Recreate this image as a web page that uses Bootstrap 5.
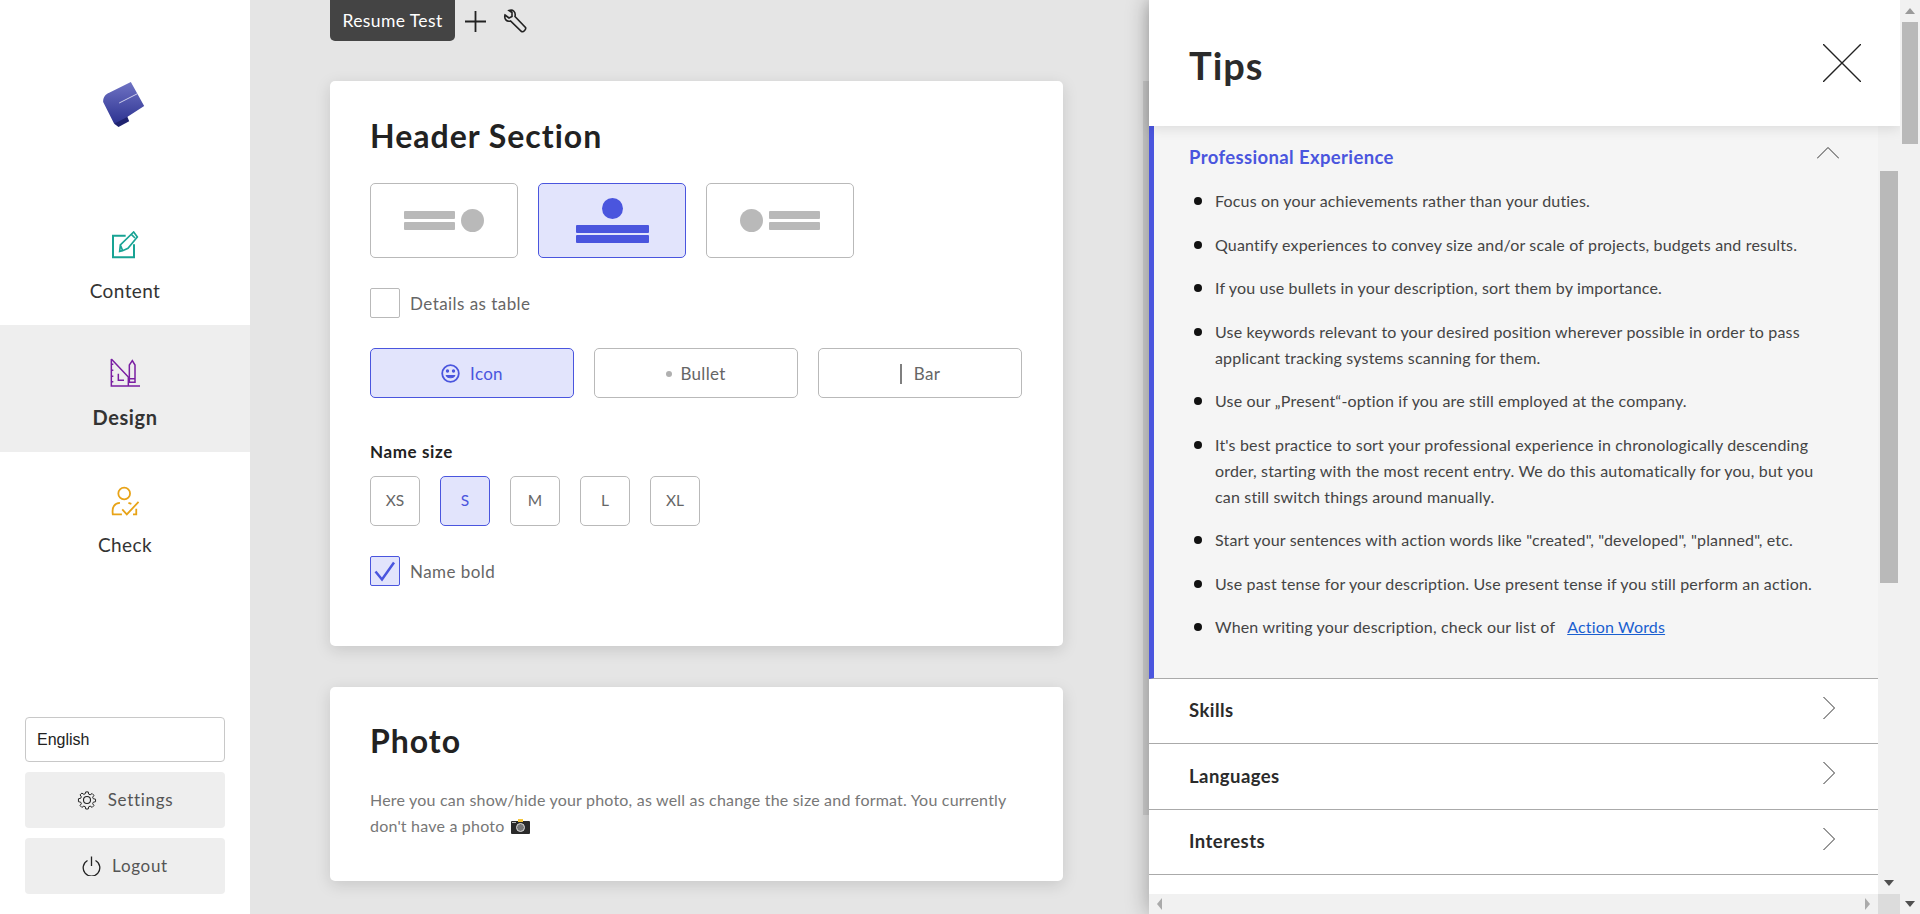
<!DOCTYPE html>
<html lang="en"><head><meta charset="utf-8"><title>Resume</title>
<link href="https://cdn.jsdelivr.net/npm/bootstrap@5.3.0/dist/css/bootstrap.min.css" rel="stylesheet">
<style>
html,body{height:914px;overflow:hidden}
body{font-family:Lato,"Noto Sans",sans-serif;color:#2b2b2b;background:#e5e5e5;font-size:16px}
.app{height:914px}
.side{width:250px;background:#fff;flex:none}
.logo-box{height:198px;padding:82px 0 0 103px}
.nav-it{height:127px;text-align:center;padding-top:33px;font-size:19px;letter-spacing:.4px;color:#333}
.nav-it svg{display:block;margin:0 auto 18px}
.nav-it.on{background:#eee;font-weight:700;font-size:20px;letter-spacing:.6px;padding-top:32px}
.nav-it.on svg{margin-bottom:14px}
.nav-it.last{padding-top:34px}
.nav-it.last svg{margin-bottom:15px}
.side-foot{padding:0 25px 20px}
.lang{height:45px;border:1px solid #c8c8c8;border-radius:4px;font:16px/43px "Liberation Sans",sans-serif;color:#222;padding-left:11px;margin-bottom:10px}
.side-btn{height:56px;background:#eee;border-radius:4px;color:#555;font-size:17px;letter-spacing:.7px;gap:11px;margin-top:10px}
.main-area{width:899px;flex:none;padding:0 0 0 80px;overflow:hidden;position:relative}
.tabbar{height:81px}
.tab-name{width:125px;height:41px;background:#444;color:#fff;border-radius:0 0 5px 5px;font-size:17.5px;letter-spacing:.4px;padding-top:1px}
.sheet{width:733px;flex:none}
.pane{background:#fff;border-radius:5px;box-shadow:0 4px 16px rgba(0,0,0,.13);padding:35px 41px 0 40px}
.pane-a{height:565px}
.pane-b{height:194px;margin-top:41px;padding-top:34px}
.pane h2{font-size:32px;letter-spacing:1px;font-weight:700;line-height:40px;margin:0;color:#222}
.preview{width:6px;height:734px;background:#d0d0d0;margin:0 0 0 80px;flex:none}
.opt{border:1px solid #b9b9b9;border-radius:5px;background:#fff;color:#666}
.opt.sel{background:#e2e4fc;border-color:#4a55de;color:#4a55de}
.lay{width:148px;height:75px;gap:6px}
.bars{gap:3px}
.bars i{display:block;height:8px;background:#b9b9b9;border-radius:1px;width:51px}
.dot{width:23px;height:23px;border-radius:50%;background:#b9b9b9}
.sel .bars{gap:2px}
.sel .bars i{background:#4a55de;width:73px}
.sel .dot{background:#4a55de;width:21px;height:21px}
.tick{width:30px;height:30px;border:1px solid #b9b9b9;border-radius:2px;background:#fff}
.tick.sel{background:#e2e4fc;border-color:#4a55de}
.tick-lab{color:#666;font-size:17px;letter-spacing:.45px;margin-left:10px;padding-top:1px}
.wide{width:204px;height:50px;font-size:17px;letter-spacing:.3px;gap:10px;padding-top:1px}
.sq{width:50px;height:50px;font-size:15.5px}
.nm-lab{font-weight:700;font-size:17px;letter-spacing:.6px;color:#222;line-height:20px;margin:44px 0 14px}
.note{font-size:16px;letter-spacing:.2px;line-height:26px;color:#777;margin:26px 0 0}
.tips{width:751px;flex:none;background:#fff;box-shadow:0 0 22px rgba(0,0,0,.32);position:relative;z-index:2}
.tips-head{height:126px;padding:0 39px 0 40px;box-shadow:0 3px 12px rgba(0,0,0,.1);position:relative;z-index:2;background:#fff}
.tips-head h1{font-size:38px;letter-spacing:1px;font-weight:700;margin:0;padding-top:6px;color:#2b2b2b}
.tips-mid{height:788px}
.tips-list{width:729px;height:768px;flex:none;overflow:hidden}
.open{height:553px;background:#f5f5f5;border-left:5px solid #4a55de;padding:0 39px 0 35px;border-bottom:1px solid #aaa}
.open-h{height:62px;color:#4a55de;font-size:18.5px;letter-spacing:.37px;font-weight:700;padding-top:18px}
.open ul{list-style:none;margin:0;padding:0 10px 0 26px;font-size:16px;letter-spacing:.17px;line-height:26px;color:#444}
.open li{margin-bottom:17.5px;position:relative}
.open li::before{content:"";position:absolute;left:-21px;top:9px;width:8px;height:8px;border-radius:50%;background:#111}
.open a{color:#1a5fd0;margin-left:8px}
.row-it{height:65.3px;padding:0 43px 0 40px;border-bottom:1px solid #aaa;font-size:18.5px;letter-spacing:.45px;font-weight:700;color:#2b2b2b;background:#fff}
.row-it svg{margin-bottom:6px}
.vbar{width:22px;flex:none;background:#f1f1f1;padding:0 2px}
.hbar{height:20px;background:#f1f1f1;padding:0 8px}
.thumb{background:#b9b9b9;height:412px;margin-top:45px}
.page-bar{width:20px;flex:none;background:#f1f1f1;padding:0 2px;position:relative;z-index:3}
.page-thumb{height:122px;background:#b9b9b9}
.ar{display:block;width:0;height:0;margin:0 auto;border-style:solid;border-color:transparent}
.ar-u{border-width:0 5px 6px;border-bottom-color:#9a9a9a}
.ar-d{border-width:6px 5px 0;border-top-color:#505050}
.ar-l{border-width:6px 5px 6px 0;border-right-color:#aaa}
.ar-r{border-width:6px 0 6px 5px;border-left-color:#aaa}
.corner{width:22px;height:20px;background:#dcdcdc;flex:none}
</style></head><body>
<div class="app d-flex">
 <aside class="side d-flex flex-column">
  <div class="logo-box">
   <svg width="42" height="45" viewBox="0 0 125 135"><defs><linearGradient id="lg" x1="0" y1="0" x2="0" y2="1"><stop offset="0" stop-color="#6f73c4"/><stop offset="1" stop-color="#2d3391"/></linearGradient></defs>
   <path d="M72 103L78 118 46 135 33 125 40 110Z" fill="#1f2370"/><path d="M83 0L123 72 72 105 33 125 0 60C-1 45 8 36 18 32Z" fill="url(#lg)"/><path d="M48 63L103 35" stroke="#e8e8f8" stroke-width="2.500"/></svg>
  </div>
  <div class="nav-it"><svg width="28" height="28" viewBox="155 62 84 84" fill="none" stroke="#18a394" stroke-width="6"><path d="M199 76H161V141H224V102"/><path d="M183 104l7 17 16-7 28-34-11-15zM216 72l11 11M190 121l-9 2 2-19" stroke-width="5"/></svg>Content</div>
  <div class="nav-it on"><svg width="31" height="31" viewBox="150 440 93 93" fill="none" stroke="#7a1fa2" stroke-width="4.500"><path d="M154 446V527H240M154 446L205 500V527M175 490V510H192M154 462h6M154 480h6M154 498h6M154 514h6"/><path d="M208 516V464L217 451 225 464V516ZM208 505H225"/></svg>Design</div>
  <div class="nav-it last"><svg width="29" height="30" viewBox="155 825 88 92" fill="none" stroke="#e8a317" stroke-width="5.500"><circle cx="195" cy="848" r="18"/><path d="M182 877C165 878 157 890 160 912H188M208 877L217 880M232 895V912H222"/><path d="M189 897L203 912 239 874"/></svg>Check</div>
  <div class="side-foot mt-auto">
   <div class="lang">English</div>
   <div class="side-btn d-flex align-items-center justify-content-center"><svg width="20" height="20" viewBox="0 0 20 20" fill="none" stroke="#222" stroke-width="1.100"><path d="M8.600 1h2.800l.5 2.500 1.600.7 2.200-1.400 2 2-1.400 2.200.7 1.600 2.500.5v2.800l-2.500.5-.7 1.600 1.400 2.200-2 2-2.200-1.400-1.600.7-.5 2.500H8.600l-.5-2.500-1.600-.7-2.200 1.400-2-2 1.400-2.200-.7-1.600-2.500-.5V8.600l2.500-.5.7-1.600-1.400-2.200 2-2 2.200 1.400 1.600-.7z" transform="translate(1 1) scale(.9)"/><circle cx="10" cy="10" r="3.500"/></svg>Settings</div>
   <div class="side-btn d-flex align-items-center justify-content-center"><svg width="19" height="20" viewBox="0 0 19 20" fill="none" stroke="#222" stroke-width="1.300"><path d="M5.500 4.500A8.300 8.300 0 1 0 13.500 4.500M9.500 0.500V10"/></svg>Logout</div>
  </div>
 </aside>
 <main class="main-area">
  <div class="tabbar d-flex align-items-start">
   <div class="tab-name d-flex align-items-center justify-content-center">Resume Test</div>
   <svg width="21" height="24" viewBox="0 0 21 24" stroke="#222" stroke-width="1.800" style="margin:9px 0 0 10px"><path d="M10.500 2V23M0 12.500H21"/></svg>
   <svg width="24" height="24" viewBox="0 0 24 24" fill="none" stroke="#222" stroke-width="1.600" style="margin:9px 0 0 17px"><path d="M2 6L6 9 9 7.500 9 3.500 6 1.500C10 0 13 3 12 7.500L22.500 18.500C23.500 20 20.500 23.500 18.500 22.500L7.500 12C3.500 13 1 10 2 6Z"/></svg>
  </div>
  <div class="d-flex align-items-start">
   <div class="sheet">
    <section class="pane pane-a">
     <h2>Header Section</h2>
     <div class="d-flex" style="gap:20px;margin-top:27px">
      <div class="opt lay d-flex align-items-center justify-content-center"><div class="bars d-flex flex-column"><i></i><i></i></div><div class="dot"></div></div>
      <div class="opt sel lay d-flex flex-column align-items-center justify-content-center"><div class="dot"></div><div class="bars d-flex flex-column"><i></i><i></i></div></div>
      <div class="opt lay d-flex align-items-center justify-content-center"><div class="dot"></div><div class="bars d-flex flex-column"><i></i><i></i></div></div>
     </div>
     <div class="d-flex align-items-center" style="margin-top:30px"><div class="tick"></div><span class="tick-lab">Details as table</span></div>
     <div class="d-flex" style="gap:20px;margin-top:30px">
      <div class="opt sel wide d-flex align-items-center justify-content-center"><svg width="19" height="19" viewBox="0 0 19 19" fill="none" stroke="#4a55de" stroke-width="1.800"><circle cx="9.500" cy="9.500" r="8.300"/><path d="M5 11.500C6 14.500 13 14.500 14 11.500Z" fill="#4a55de" stroke-width="1"/><circle cx="6.500" cy="7" r=".8" fill="#4a55de"/><circle cx="12.500" cy="7" r=".8" fill="#4a55de"/></svg>Icon</div>
      <div class="opt wide d-flex align-items-center justify-content-center" style="gap:8px"><svg width="6" height="6" viewBox="0 0 6 6"><circle cx="3" cy="3" r="3" fill="#b0b0b0"/></svg>Bullet</div>
      <div class="opt wide d-flex align-items-center justify-content-center" style="gap:12px"><svg width="2" height="20" viewBox="0 0 2 20"><path d="M1 0V20" stroke="#555" stroke-width="1.500"/></svg>Bar</div>
     </div>
     <div class="nm-lab">Name size</div>
     <div class="d-flex" style="gap:20px">
      <div class="opt sq d-flex align-items-center justify-content-center">XS</div>
      <div class="opt sel sq d-flex align-items-center justify-content-center">S</div>
      <div class="opt sq d-flex align-items-center justify-content-center">M</div>
      <div class="opt sq d-flex align-items-center justify-content-center">L</div>
      <div class="opt sq d-flex align-items-center justify-content-center">XL</div>
     </div>
     <div class="d-flex align-items-center" style="margin-top:30px"><div class="tick sel d-flex align-items-center justify-content-center"><svg width="24" height="24" viewBox="0 0 24 24" fill="none" stroke="#4a55de" stroke-width="2.500"><path d="M2.500 12.500L9 20.500 21 3.500"/></svg></div><span class="tick-lab">Name bold</span></div>
    </section>
    <section class="pane pane-b">
     <h2>Photo</h2>
     <p class="note">Here you can show/hide your photo, as well as change the size and format. You currently don't have a photo <svg width="19" height="15" viewBox="0 0 19 15" style="vertical-align:-2px;margin-left:2px"><rect y="2" width="19" height="13" rx="1" fill="#2a2a2a"/><rect x="7" y="0" width="5" height="3" fill="#f5c63c"/><circle cx="9.500" cy="8.500" r="4" fill="#777" stroke="#ddd"/><rect x="1" y="3" width="4" height="1" fill="#bbb"/></svg></p>
    </section>
   </div>
   <div class="preview"></div>
  </div>
 </main>
 <section class="tips d-flex flex-column">
  <header class="tips-head d-flex align-items-center justify-content-between"><h1>Tips</h1><svg width="38" height="38" viewBox="0 0 38 38" stroke="#222" stroke-width="1.400"><path d="M0 0L38 38M38 0L0 38"/></svg></header>
  <div class="tips-mid d-flex">
   <div class="d-flex flex-column">
    <div class="tips-list">
     <div class="open">
      <div class="open-h d-flex justify-content-between"><span>Professional Experience</span><svg width="22" height="12" viewBox="0 0 22 12" fill="none" stroke="#333" stroke-width="1" style="margin-top:3px"><path d="M0 11.500L11 .5 22 11.500"/></svg></div>
      <ul>
       <li>Focus on your achievements rather than your duties.</li>
       <li>Quantify experiences to convey size and/or scale of projects, budgets and results.</li>
       <li>If you use bullets in your description, sort them by importance.</li>
       <li>Use keywords relevant to your desired position wherever possible in order to pass applicant tracking systems scanning for them.</li>
       <li>Use our „Present“-option if you are still employed at the company.</li>
       <li>It's best practice to sort your professional experience in chronologically descending order, starting with the most recent entry. We do this automatically for you, but you can still switch things around manually.</li>
       <li>Start your sentences with action words like "created", "developed", "planned", etc.</li>
       <li>Use past tense for your description. Use present tense if you still perform an action.</li>
       <li>When writing your description, check our list of <a href="#">Action Words</a></li>
      </ul>
     </div>
     <div class="row-it d-flex align-items-center justify-content-between"><span>Skills</span><svg width="12" height="22" viewBox="0 0 12 22" fill="none" stroke="#333"><path d="M.5 0L11.500 11 .5 22"/></svg></div>
     <div class="row-it d-flex align-items-center justify-content-between"><span>Languages</span><svg width="12" height="22" viewBox="0 0 12 22" fill="none" stroke="#333"><path d="M.5 0L11.500 11 .5 22"/></svg></div>
     <div class="row-it d-flex align-items-center justify-content-between"><span>Interests</span><svg width="12" height="22" viewBox="0 0 12 22" fill="none" stroke="#333"><path d="M.5 0L11.500 11 .5 22"/></svg></div>
    </div>
    <div class="hbar d-flex align-items-center justify-content-between"><i class="ar ar-l m-0"></i><i class="ar ar-r m-0"></i></div>
   </div>
   <div class="d-flex flex-column">
    <div class="vbar flex-grow-1 d-flex flex-column"><div class="thumb"></div><i class="ar ar-d mt-auto mb-2"></i></div>
    <div class="corner"></div>
   </div>
  </div>
 </section>
 <div class="page-bar d-flex flex-column"><i class="ar ar-u" style="margin-top:8px;margin-bottom:8px"></i><div class="page-thumb"></div><i class="ar ar-d mt-auto" style="margin-bottom:7px"></i></div>
</div>
</body></html>
